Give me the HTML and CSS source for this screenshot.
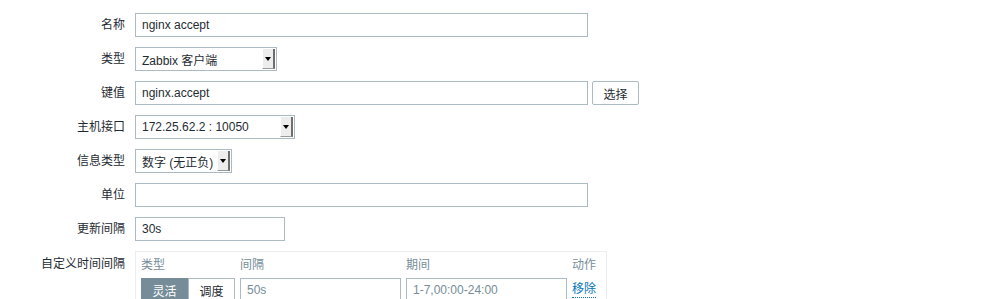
FILE: index.html
```html
<!DOCTYPE html>
<html lang="zh-CN">
<head>
    <meta charset="UTF-8">
    <title>监控项</title>
    <link rel="stylesheet" href="styles.css">
</head>
<body>
    <form class="item-form">
        <div class="form-row">
            <label class="form-label">名称</label>
            <input class="text-input wide" type="text" value="nginx accept">
        </div>
        <div class="form-row">
            <label class="form-label">类型</label>
            <div class="select sel-type"><span class="select-text">Zabbix 客户端</span><span class="select-arrow"></span></div>
        </div>
        <div class="form-row">
            <label class="form-label">键值</label>
            <div class="field-group">
                <input class="text-input wide" type="text" value="nginx.accept">
                <button type="button" class="btn-alt">选择</button>
            </div>
        </div>
        <div class="form-row">
            <label class="form-label">主机接口</label>
            <div class="select sel-iface"><span class="select-text">172.25.62.2 : 10050</span><span class="select-arrow"></span></div>
        </div>
        <div class="form-row">
            <label class="form-label">信息类型</label>
            <div class="select sel-info"><span class="select-text">数字 (无正负)</span><span class="select-arrow"></span></div>
        </div>
        <div class="form-row">
            <label class="form-label">单位</label>
            <input class="text-input wide" type="text" value="">
        </div>
        <div class="form-row">
            <label class="form-label">更新间隔</label>
            <input class="text-input short" type="text" value="30s">
        </div>
        <div class="form-row top">
            <label class="form-label pad">自定义时间间隔</label>
            <div class="interval-box">
                <div class="interval-grid">
                    <div class="col-head">类型</div>
                    <div class="col-head">间隔</div>
                    <div class="col-head">期间</div>
                    <div class="col-head">动作</div>

                    <div class="radio-seg">
                        <span class="seg active">灵活</span>
                        <span class="seg">调度</span>
                    </div>
                    <input class="text-input cell placeholder" type="text" value="50s">
                    <input class="text-input cell placeholder" type="text" value="1-7,00:00-24:00">
                    <a class="link-action" href="#">移除</a>
                </div>
            </div>
        </div>
    </form>
</body>
</html>
```

FILE: styles.css
```css
* {
    margin: 0;
    padding: 0;
    box-sizing: border-box;
}

body {
    font-family: "Liberation Sans", "Noto Sans CJK SC", sans-serif;
    font-size: 12px;
    color: #1f2c33;
    background: #fff;
}

.item-form {
    padding-top: 13px;
    display: flex;
    flex-direction: column;
    gap: 10px;
}

.form-row {
    display: grid;
    grid-template-columns: 125px auto;
    column-gap: 10px;
    align-items: center;
}

.form-row.top {
    align-items: start;
}

.form-label {
    text-align: right;
    line-height: 24px;
}

.form-label.pad {
    padding-top: 1px;
}

.field-group {
    display: flex;
    gap: 4px;
}

.text-input {
    height: 24px;
    padding: 0 6px;
    border: 1px solid #acbbc2;
    background: #fff;
    color: #1f2c33;
    font: inherit;
    outline: none;
}

.text-input.wide {
    width: 453px;
}

.text-input.short {
    width: 150px;
}

.btn-alt {
    height: 24px;
    width: 47px;
    border: 1px solid #acbbc2;
    border-radius: 2px;
    background: #fff;
    color: #1f2c33;
    font: inherit;
}

/* old style native select look */
.select {
    height: 24px;
    border: 1px solid #acbbc2;
    background: #fff;
    display: flex;
    align-items: center;
    justify-content: space-between;
    padding: 0 1px 0 6px;
}

.sel-type { width: 142px; }
.sel-iface { width: 160px; }
.sel-info { width: 97px; }

.select-arrow {
    width: 13px;
    height: 20px;
    background: #ededed;
    border-right: 2px solid #6e6e6e;
    border-bottom: 1px solid #9a9a9a;
    border-left: 1px solid #fff;
    position: relative;
}

.select-arrow::after {
    content: "";
    position: absolute;
    left: 2px;
    top: 8px;
    border-left: 3px solid transparent;
    border-right: 3px solid transparent;
    border-top: 4px solid #000;
}

.interval-box {
    width: 472px;
    border: 1px solid #ebeef0;
    border-bottom: none;
    padding: 4px 5px 0;
    height: 60px;
}

.interval-grid {
    display: grid;
    grid-template-columns: 94px 161px 161px auto;
    column-gap: 5px;
    row-gap: 4px;
    align-items: center;
}

.col-head {
    color: #768d99;
    line-height: 18px;
}

.radio-seg {
    display: flex;
    height: 24px;
}

.seg {
    flex: 1;
    display: flex;
    align-items: center;
    justify-content: center;
    border: 1px solid #acbbc2;
    background: #fff;
}

.seg.active {
    background: #768d99;
    border-color: #768d99;
    color: #fff;
}

.text-input.cell {
    width: 161px;
}

.text-input.placeholder {
    color: #768d99;
}

.link-action {
    color: #0275b8;
    text-decoration: none;
    border-bottom: 1px dotted #0275b8;
    justify-self: start;
    line-height: 15px;
}
```
